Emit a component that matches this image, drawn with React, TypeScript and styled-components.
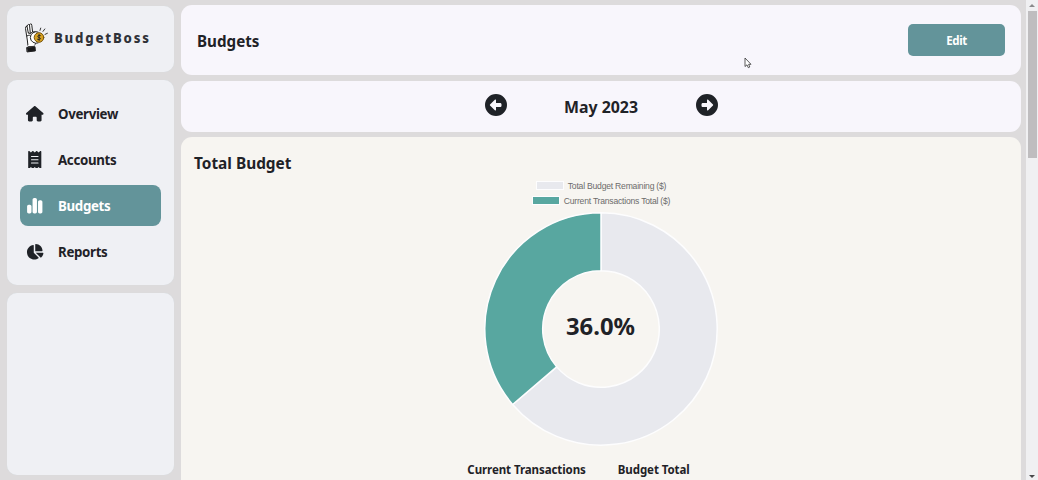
import React from "react";
import styled, { createGlobalStyle } from "styled-components";
import {
  FaHouse,
  FaReceipt,
  FaChartSimple,
  FaChartPie,
  FaCircleLeft,
  FaCircleRight,
} from "react-icons/fa6";

const GlobalStyle = createGlobalStyle`
  *, *::before, *::after { box-sizing: border-box; }
  body {
    margin: 0;
    background: #dddbdc;
    color: #1f2227;
    font-family: "Noto Sans", "Open Sans", sans-serif;
    overflow: hidden;
  }
  h1, h2, p { margin: 0; }
  button { border: 0; padding: 0; font: inherit; color: inherit; background: none; }
`;

const Page = styled.div`
  display: flex;
  height: 480px;
  overflow: hidden;
`;

const Sidebar = styled.aside`
  display: flex;
  flex-direction: column;
  gap: 8px;
  width: 167px;
  margin: 6px 7px 5px;
  flex: none;
`;

const SideCard = styled.section<{ $height?: number }>`
  flex: ${(p) => (p.$height ? "none" : "1")};
  height: ${(p) => (p.$height ? `${p.$height}px` : "auto")};
  border-radius: 10px;
  background: #eff0f4;
  box-shadow: 0 0 1px #d3dde2;
`;

const Brand = styled.div`
  display: flex;
  align-items: center;
  height: 100%;
  padding: 0 0 2px 17px;
`;

const BrandName = styled.span`
  margin: 0 0 1px 5px;
  font-weight: 800;
  font-size: 13.2px;
  letter-spacing: 1.8px;
  color: #303238;
`;

const Nav = styled.nav`
  display: flex;
  flex-direction: column;
  gap: 5px;
  padding: 13px 13.5px 0 13px;
`;

const NavItem = styled.a<{ $active?: boolean }>`
  display: flex;
  align-items: center;
  height: 41px;
  padding-left: 6px;
  border-radius: 8px;
  font-weight: 700;
  font-size: 13.3px;
  letter-spacing: -0.33px;
  color: ${(p) => (p.$active ? "#fff" : "#1f2227")};
  background: ${(p) => (p.$active ? "#63949a" : "transparent")};
`;

const NavIcon = styled.span`
  display: flex;
  justify-content: center;
  width: 18px;
  margin-right: 14px;
  font-size: 17.5px;
  & > svg { flex: none; }
`;

const Main = styled.main`
  display: flex;
  flex-direction: column;
  width: 840px;
  flex: none;
  padding-top: 5px;
`;

const Header = styled.header`
  display: flex;
  align-items: center;
  justify-content: space-between;
  flex: none;
  height: 70px;
  padding: 0 16px;
  border-radius: 11px;
  background: #f8f6fc;
`;

const Title = styled.h1`
  font-size: 15.2px;
  line-height: 20px;
  padding-top: 2px;
`;

const EditButton = styled.button`
  width: 97px;
  height: 32px;
  border-radius: 5px;
  background: #63949a;
  color: #fff;
  font-size: 11.5px;
  letter-spacing: -0.4px;
  font-weight: 700;
`;

const MonthBar = styled.section`
  display: flex;
  align-items: center;
  justify-content: center;
  flex: none;
  height: 51px;
  margin: 6px 0 5px;
  border-radius: 11px;
  background: #f8f6fc;
`;

const MonthArrow = styled.button`
  display: flex;
  font-size: 22px;
  margin-bottom: 3px;
`;

const MonthName = styled.h2`
  width: 189px;
  text-align: center;
  font-size: 15.9px;
`;

const BudgetPanel = styled.section`
  display: flex;
  flex-direction: column;
  flex: 1;
  padding: 16px 13px 0;
  border-radius: 11px 11px 0 0;
  background: #f7f5f1;
`;

const PanelTitle = styled.h2`
  font-size: 15.4px;
  line-height: 22px;
`;

const Legend = styled.div`
  display: flex;
  flex-direction: column;
  align-items: center;
  margin-top: 3px;
`;

const LegendRow = styled.div`
  display: flex;
  align-items: center;
  height: 15px;
  font: 8.6px "Liberation Sans", sans-serif;
  letter-spacing: -0.22px;
  color: #6c6b6b;
`;

const Swatch = styled.span<{ $color: string }>`
  width: 28px;
  height: 9px;
  margin-right: 4px;
  border: 1px solid #fdfdfe;
  background: ${(p) => p.$color};
`;

const ChartArea = styled.div`
  display: grid;
  place-items: center;
  margin-top: 4px;
  & > * { grid-area: 1 / 1; }
`;

const Percent = styled.p`
  font-size: 23.8px;
  font-weight: 700;
  padding: 0 1px 7px 0;
`;

const Totals = styled.div`
  display: flex;
  justify-content: center;
  gap: 32px;
  margin-top: 13px;
  padding-right: 45px;
  font-size: 11.5px;
  letter-spacing: -0.08px;
  line-height: 21px;
  font-weight: 700;
`;

const ScrollTrack = styled.div`
  display: flex;
  flex-direction: column;
  align-items: center;
  width: 12px;
  margin-left: auto;
  padding: 4px 0 2px;
  background: #f0f0f2;
`;

const ScrollThumb = styled.div`
  width: 9px;
  height: 147px;
  margin: 4px 0 auto;
  background: #bfbdbf;
`;

const Cursor = styled.svg`
  position: absolute;
  left: 744px;
  top: 57px;
`;

const REMAINING = 0.6375;

function point(radius: number, share: number) {
  const angle = share * Math.PI * 2;
  return `${117 + radius * Math.sin(angle)} ${117 - radius * Math.cos(angle)}`;
}

function ring(from: number, to: number) {
  const large = to - from > 0.5 ? 1 : 0;
  return `M${point(116.2, from)} A116.2 116.2 0 ${large} 1 ${point(116.2, to)} L${point(58.3, to)} A58.3 58.3 0 ${large} 0 ${point(58.3, from)}Z`;
}

function Doughnut() {
  return (
    <svg width="234" height="234" viewBox="0 0 234 234" stroke="#fdfdfe" strokeWidth="1.5">
      <path d={ring(0, REMAINING)} fill="#e8e9ee" />
      <path d={ring(REMAINING, 1)} fill="#58a7a0" />
    </svg>
  );
}

function HandCoinLogo() {
  return (
    <svg width="25" height="30" viewBox="0 0 25 30" fill="none" stroke="#222" strokeWidth="1" strokeLinecap="round" strokeLinejoin="round">
      <path d="M4 23 3.3 17 2.5 12 1.5 5.5Q1.3 3.2 3 3.2L3.6 2Q4.6 1 5.5 1.7L6.3.9Q7.7.5 7.8 2.3L8.6 9Q12 8 14 10L12 18Q12 21 10 23Z" fill="#fff" />
      <path d="M3 3.2 4.3 10M5.5 2 6.3 10M4.3 10Q6 12 8.6 9M3 13Q6 11 6.5 13" />
      <path d="M14 9A5.8 5.8 0 1 0 14 20" fill="#fff" />
      <circle cx="15" cy="14.5" r="4.8" fill="#d5a022" stroke="#75530f" />
      <path d="M16.4 12.5Q13.9 11.5 13.8 13.3C13.7 15 16.6 14 16.4 16Q16 17.4 13.5 16.3M15.1 11.5V17.5" strokeWidth=".9" />
      <path d="m16 7.4.7-2.3M19 8.4l1.8-2.4M21 11.4l2.4-1.1" strokeWidth=".9" />
      <path d="m3 24.5 8-.8.4 4.2-8 1Z" fill="#171719" />
      <path d="M4 22.7 10.5 22" stroke="#fff" />
    </svg>
  );
}

const navigation = [
  { label: "Overview", icon: <FaHouse /> },
  { label: "Accounts", icon: <FaReceipt /> },
  { label: "Budgets", icon: <FaChartSimple />, active: true },
  { label: "Reports", icon: <FaChartPie /> },
];

export default function App() {
  return (
    <>
      <GlobalStyle />
      <Page>
        <Sidebar>
          <SideCard $height={66}>
            <Brand>
              <HandCoinLogo />
              <BrandName>BudgetBoss</BrandName>
            </Brand>
          </SideCard>
          <SideCard $height={205}>
            <Nav>
              {navigation.map((item) => (
                <NavItem key={item.label} $active={item.active}>
                  <NavIcon>{item.icon}</NavIcon>
                  {item.label}
                </NavItem>
              ))}
            </Nav>
          </SideCard>
          <SideCard />
        </Sidebar>
        <Main>
          <Header>
            <Title>Budgets</Title>
            <EditButton>Edit</EditButton>
          </Header>
          <MonthBar>
            <MonthArrow aria-label="Previous month"><FaCircleLeft /></MonthArrow>
            <MonthName>May 2023</MonthName>
            <MonthArrow aria-label="Next month"><FaCircleRight /></MonthArrow>
          </MonthBar>
          <BudgetPanel>
            <PanelTitle>Total Budget</PanelTitle>
            <Legend>
              <LegendRow><Swatch $color="#e8e9ee" />Total Budget Remaining ($)</LegendRow>
              <LegendRow><Swatch $color="#58a7a0" />Current Transactions Total ($)</LegendRow>
            </Legend>
            <ChartArea>
              <Doughnut />
              <Percent>36.0%</Percent>
            </ChartArea>
            <Totals>
              <span>Current Transactions</span>
              <span>Budget Total</span>
            </Totals>
          </BudgetPanel>
        </Main>
        <ScrollTrack>
          <svg width="6" height="3" viewBox="0 0 6 3"><path d="M0 3 3 0 6 3Z" fill="#8a8a8c" /></svg>
          <ScrollThumb />
          <svg width="6" height="3" viewBox="0 0 6 3"><path d="M0 0H6L3 3Z" fill="#48484a" /></svg>
        </ScrollTrack>
      </Page>
      <Cursor width="8" height="12" viewBox="0 0 8 12" fill="#fff" stroke="#333" strokeWidth=".8">
        <path d="M1 1V9.5L3 7.8 4.3 10.7 5.8 10 4.6 7.3H7Z" />
      </Cursor>
    </>
  );
}
